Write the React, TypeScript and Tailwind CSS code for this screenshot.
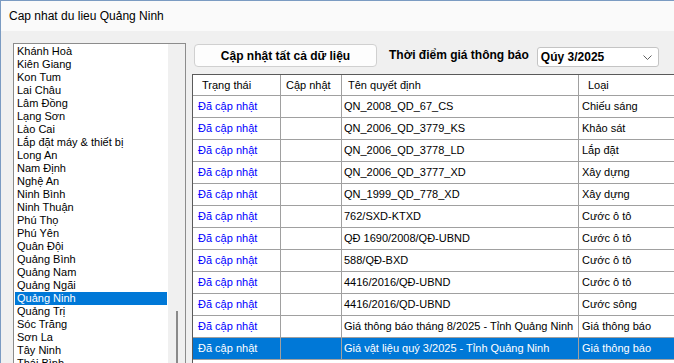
const provinces = [
  "Khánh Hoà",
  "Kiên Giang",
  "Kon Tum",
  "Lai Châu",
  "Lâm Đồng",
  "Lạng Sơn",
  "Lào Cai",
  "Lắp đặt máy & thiết bị",
  "Long An",
  "Nam Định",
  "Nghệ An",
  "Ninh Bình",
  "Ninh Thuận",
  "Phú Thọ",
  "Phú Yên",
  "Quân Đội",
  "Quảng Bình",
  "Quảng Nam",
  "Quảng Ngãi",
  "Quảng Ninh",
  "Quảng Trị",
  "Sóc Trăng",
  "Sơn La",
  "Tây Ninh",
  "Thái Bình",
];

type Row = {
  status: string;
  name: string;
  kind: string;
};

const rows: Row[] = [
  { status: "Đã cập nhật", name: "QN_2008_QD_67_CS", kind: "Chiếu sáng" },
  { status: "Đã cập nhật", name: "QN_2006_QD_3779_KS", kind: "Khảo sát" },
  { status: "Đã cập nhật", name: "QN_2006_QD_3778_LD", kind: "Lắp đặt" },
  { status: "Đã cập nhật", name: "QN_2006_QD_3777_XD", kind: "Xây dựng" },
  { status: "Đã cập nhật", name: "QN_1999_QD_778_XD", kind: "Xây dựng" },
  { status: "Đã cập nhật", name: "762/SXD-KTXD", kind: "Cước ô tô" },
  { status: "Đã cập nhật", name: "QĐ 1690/2008/QĐ-UBND", kind: "Cước ô tô" },
  { status: "Đã cập nhật", name: "588/QĐ-BXD", kind: "Cước ô tô" },
  { status: "Đã cập nhật", name: "4416/2016/QĐ-UBND", kind: "Cước ô tô" },
  { status: "Đã cập nhật", name: "4416/2016/QD-UBND", kind: "Cước sông" },
  { status: "Đã cập nhật", name: "Giá thông báo tháng 8/2025 - Tỉnh Quảng Ninh", kind: "Giá thông báo" },
  { status: "Đã cập nhật", name: "Giá vật liệu quý 3/2025 - Tỉnh Quảng Ninh", kind: "Giá thông báo" },
];

const selectedProvince = "Quảng Ninh";
const selectedRow = 11;

export default function App() {
  return (
    <div className="w-[674px] h-[363px] overflow-hidden border-l border-t border-[#7b9bc2] bg-[#f0f0f0] font-['Liberation_Sans',Arial,sans-serif] text-black flex flex-col">
      {/* TITLE BAR */}
      <div className="h-[30px] shrink-0 bg-[#fafafa] flex items-center pl-[8px] text-[12px]">
        Cap nhat du lieu Quảng Ninh
      </div>

      <div className="flex flex-1 min-h-0 pl-[12px] pt-[12px]">
        {/* PROVINCE LIST */}
        <div className="w-[173px] shrink-0 border border-[#8c8c8c] flex h-[340px]">
          <div className="flex-1 bg-white pt-[1px] px-[1px] overflow-hidden">
            {provinces.map((p) => (
              <div
                key={p}
                className={
                  p === selectedProvince
                    ? "h-[13px] leading-[13px] text-[11px] pl-[2px] bg-[#0078d7] text-white whitespace-nowrap"
                    : "h-[13px] leading-[13px] text-[11px] pl-[2px] whitespace-nowrap"
                }
              >
                {p}
              </div>
            ))}
          </div>
          <div className="w-[17px] shrink-0 bg-[#f0f0f0] flex justify-center pt-[267px]">
            <div className="w-[2px] h-full bg-[#8a8a8a]" />
          </div>
        </div>

        {/* RIGHT PANEL */}
        <div className="flex-1 min-w-0 flex flex-col ml-[6px]">
          <div className="h-[31px] shrink-0 flex items-start">
            <button className="ml-[2px] mt-[1px] w-[183px] h-[23px] rounded-[4px] border border-[#d0d0d0] bg-[#fdfdfd] text-[12px] font-bold">
              Cập nhật tất cả dữ liệu
            </button>
            <div className="ml-[12px] mt-[4px] text-[12px] font-bold whitespace-nowrap leading-[16px]">
              Thời điểm giá thông báo
            </div>
            <div className="ml-[8px] mt-[4px] w-[122px] h-[20px] rounded-[3px] border border-[#c4c4c4] bg-white flex items-center pl-[3px] pr-[6px]">
              <span className="flex-1 text-[12px] font-bold">Qúy 3/2025</span>
              <svg width="9" height="5" viewBox="0 0 9 5" fill="none">
                <path d="M0.5 0.5 L4.5 4.5 L8.5 0.5" stroke="#606060" strokeWidth="1" />
              </svg>
            </div>
          </div>

          {/* GRID */}
          <div className="flex-1 border-l border-t border-[#5a5a5a] bg-white text-[11px] overflow-hidden">
            <div className="flex h-[21px] border-b border-[#a0a0a0] items-center whitespace-nowrap">
              <div className="w-[88px] shrink-0 h-full border-r border-[#a0a0a0] flex items-center pl-[9px]">Trạng thái</div>
              <div className="w-[61px] shrink-0 h-full border-r border-[#a0a0a0] flex items-center pl-[5px]">Cập nhật</div>
              <div className="w-[237px] shrink-0 h-full border-r border-[#a0a0a0] flex items-center pl-[6px]">Tên quyết định</div>
              <div className="flex-1 h-full flex items-center pl-[9px]">Loại</div>
            </div>
            {rows.map((r, i) => {
              const sel = i === selectedRow;
              return (
                <div
                  key={i}
                  className={
                    sel
                      ? "flex h-[22px] border-b border-[#a0a0a0] whitespace-nowrap bg-[#0078d7] text-white"
                      : "flex h-[22px] border-b border-[#a0a0a0] whitespace-nowrap"
                  }
                >
                  <div className={sel ? "w-[88px] shrink-0 border-r border-[#a0a0a0] flex items-center pl-[5px]" : "w-[88px] shrink-0 border-r border-[#a0a0a0] flex items-center pl-[5px] text-[#0000ff]"}>
                    {r.status}
                  </div>
                  <div className="w-[61px] shrink-0 border-r border-[#a0a0a0]" />
                  <div className="w-[237px] shrink-0 border-r border-[#a0a0a0] flex items-center pl-[2px] overflow-hidden">
                    {r.name}
                  </div>
                  <div className="flex-1 flex items-center pl-[3px]">{r.kind}</div>
                </div>
              );
            })}
          </div>
        </div>
      </div>
    </div>
  );
}
